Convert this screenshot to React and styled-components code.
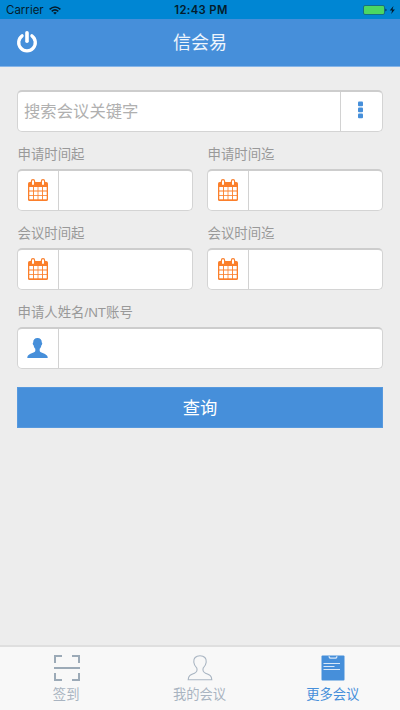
import React from "react";
import styled, { createGlobalStyle } from "styled-components";

const BLUE = "#468fda";
const ORANGE = "#fb7f2b";
const INK = "#041c2c";

const GlobalStyle = createGlobalStyle`
  * { box-sizing: border-box; }
  body {
    margin: 0;
    background: #ededed;
    font-family: "Liberation Sans", "Noto Sans CJK SC", sans-serif;
  }
`;

const Screen = styled.div`
  display: flex;
  flex-direction: column;
  height: 710px;
  overflow: hidden;
`;

const StatusBar = styled.div`
  display: grid;
  grid-template-columns: 1fr auto 1fr;
  align-items: center;
  flex: none;
  height: 19px;
  padding: 1px 4px 0 6px;
  background: #0086d3;
  color: ${INK};
  font-family: Inter, sans-serif;
  font-size: 11.5px;
  line-height: 18px;
`;

const StatusGroup = styled.div`
  display: flex;
  align-items: center;
  justify-content: ${(p) => (p.$end ? "flex-end" : "flex-start")};
  gap: ${(p) => (p.$end ? "4px" : "5px")};
`;

const Clock = styled.span`
  font-size: 11.3px;
  font-weight: 600;
  letter-spacing: 0.35px;
`;

const Header = styled.header`
  display: grid;
  grid-template-columns: 60px 1fr 60px;
  align-items: center;
  flex: none;
  height: 48px;
  background: ${BLUE};
  border-bottom: 1px solid #86b5e8;
`;

const PowerButton = styled.button`
  display: flex;
  width: 52px;
  height: 40px;
  padding: 0 0 1px 15px;
  align-items: center;
  border: 0;
  background: none;
`;

const Title = styled.h1`
  margin: 1px 0 0;
  color: #eef5fc;
  font-size: 18px;
  line-height: 24px;
  font-weight: 400;
  text-align: center;
`;

const Form = styled.main`
  flex: 1;
  padding: 23px 17px 0;
`;

const Row = styled.div`
  display: grid;
  grid-template-columns: ${(p) => (p.$single ? "1fr" : "repeat(2, minmax(0, 1fr))")};
  gap: 14px;
`;

const FieldGroup = styled.label`
  display: block;
  min-width: 0;
`;

const Label = styled.span`
  display: block;
  height: 37px;
  padding: 13px 0 0 0.5px;
  color: #999;
  font-size: 13.4px;
  line-height: 20px;
  white-space: nowrap;
`;

const Field = styled.div`
  display: flex;
  height: 42px;
  overflow: hidden;
  border: 1px solid #d4d4d4;
  border-top: 2px solid #cdcdcd;
  border-radius: 5px;
  background: #fff;
`;

const Addon = styled.span`
  display: flex;
  flex: none;
  align-items: center;
  justify-content: center;
  width: ${(p) => (p.$right ? "42px" : "41px")};
  padding-bottom: ${(p) => (p.$right ? "3px" : "2px")};
  padding-right: ${(p) => (p.$right ? "2px" : "1px")};
  border-style: solid;
  border-color: #d2d2d2;
  border-width: ${(p) => (p.$right ? "0 0 0 1px" : "0 1px 0 0")};
`;

const Input = styled.input`
  flex: 1;
  min-width: 0;
  padding: 0 6px 1px;
  border: 0;
  outline: 0;
  background: transparent;
  color: #555;
  font-family: inherit;
  font-size: 16.35px;
  &::placeholder { color: #b0b0b0; opacity: 1; }
`;

const SubmitButton = styled.button`
  display: block;
  width: 100%;
  height: 41px;
  margin-top: 18px;
  padding: 0 0 2px;
  border: 1px solid #5799de;
  background: ${BLUE};
  color: #fff;
  font-family: inherit;
  font-size: 17.3px;
`;

const TabBar = styled.nav`
  display: grid;
  grid-template-columns: repeat(3, 1fr);
  flex: none;
  height: 65px;
  border-top: 2px solid #dfdfdf;
  background: #f8f8f8;
`;

const Tab = styled.a`
  display: flex;
  flex-direction: column;
  align-items: center;
  padding-top: 8px;
  color: ${(p) => (p.$active ? BLUE : "#a9b4c1")};
  font-size: 13.3px;
  line-height: 20px;
`;

const TabLabel = styled.span`
  margin-top: 4px;
  padding-right: 1px;
`;

const WifiIcon = () => (
  <svg width="12" height="9" viewBox="0 0 12 9" fill="none" stroke={INK} strokeWidth="1.6">
    <path d="M.6 3.3Q6-1.3 11.4 3.3M2.7 5.4Q6 2.5 9.3 5.4" />
    <path d="M4.2 6.7Q6 5.1 7.8 6.7L6 8.6Z" fill={INK} stroke="none" />
  </svg>
);

const BatteryIcon = () => (
  <svg width="33" height="10" viewBox="0 0 33 10">
    <rect x=".5" y=".5" width="21" height="9" rx="1.5" fill="#4bd763" stroke="#166f83" />
    <path d="M22.5 3.5Q24.5 5 22.5 6.5Z" fill={INK} />
    <path d="M30.5 1L26.7 5.5H29.1L28.2 9L31.9 4.4H29.5Z" fill={INK} />
  </svg>
);

const PowerIcon = () => (
  <svg width="24" height="24" viewBox="0 0 24 24" fill="none" stroke="#fff" strokeLinecap="round">
    <path d="M7.1 5.8A8.3 8.3 0 1 0 16.9 5.8" strokeWidth="3.3" />
    <path d="M12 2.8V11.2" strokeWidth="3.6" />
  </svg>
);

const CalendarIcon = () => (
  <svg width="20" height="22" viewBox="0 0 20 22">
    <rect y="3" width="20" height="19" rx="1.6" fill={ORANGE} />
    <g fill="#fff">
      {[8, 12.5, 16.8].map((y) =>
        [1.3, 5.9, 10.4, 15].map((x) => (
          <rect key={`${x}-${y}`} x={x} y={y} width="3.7" height="3.5" />
        ))
      )}
    </g>
    <rect x="3.4" y=".6" width="3.2" height="6" rx="1.6" fill="#fff" stroke={ORANGE} strokeWidth="1.2" />
    <rect x="13.4" y=".6" width="3.2" height="6" rx="1.6" fill="#fff" stroke={ORANGE} strokeWidth="1.2" />
  </svg>
);

const UserIcon = () => (
  <svg width="21" height="20" viewBox="0 0 21 20" fill={BLUE}>
    <path d="M10.5 0C7.7 0 6.2 1.6 6.2 4.5C5.4 4.7 5.7 6.7 6.6 7.3C6.9 9 7.6 10.1 8.3 10.8V13C7.7 14.8 1.9 15.5.7 18C.4 18.7.3 19.3.3 20H20.7C20.7 19.3 20.6 18.7 20.3 18C19.1 15.5 13.3 14.8 12.7 13V10.8C13.4 10.1 14.1 9 14.4 7.3C15.3 6.7 15.6 4.7 14.8 4.5C14.8 1.6 13.3 0 10.5 0Z" />
  </svg>
);

const MoreIcon = () => (
  <svg width="5" height="18" viewBox="0 0 5 18" fill={BLUE}>
    <rect y=".5" width="5" height="4.7" rx="1" />
    <rect y="6.5" width="5" height="4.7" rx="1" />
    <rect y="12.5" width="5" height="4.7" rx="1" />
  </svg>
);

const ScanIcon = () => (
  <svg width="26" height="26" viewBox="0 0 26 26" fill="none" stroke="#9caab7" strokeWidth="2">
    <path d="M1 8V1H8M18 1H25V8M25 18V25H18M8 25H1V18M0 13H26" />
  </svg>
);

const ProfileIcon = () => (
  <svg width="26" height="26" viewBox="0 0 26 26" fill="none" stroke="#a9b5c2" strokeWidth="1.1">
    <path d="M13 .8C8.8.8 6.3 3.2 6.8 7.2C7.1 10 8.5 11.3 9.8 13C10.5 15.4 10 17 7.5 18.2C4 19.8 1.5 20.2 1.2 24.7H24.8C24.5 20.2 22 19.8 18.5 18.2C16 17 15.5 15.4 16.2 13C17.5 11.3 18.9 10 19.2 7.2C19.7 3.2 17.2.8 13 .8Z" />
  </svg>
);

const NotesIcon = () => (
  <svg width="24" height="26" viewBox="0 0 24 26">
    <rect x=".5" y=".5" width="23" height="25" rx="1" fill={BLUE} />
    <path d="M7.8 1.3L9 3.2H15L16.2 1.3" fill="none" stroke="#d9e8f8" strokeWidth="1.3" />
    <path d="M2.5 8.5H19M2.5 11.5H13.5M2.5 14.5H19" fill="none" stroke="#d9e8f8" strokeWidth="1.1" />
  </svg>
);

const DateField = ({ label }) => (
  <FieldGroup>
    <Label>{label}</Label>
    <Field>
      <Addon><CalendarIcon /></Addon>
      <Input />
    </Field>
  </FieldGroup>
);

export default function App() {
  return (
    <Screen>
      <GlobalStyle />
      <StatusBar>
        <StatusGroup>
          <span>Carrier</span>
          <WifiIcon />
        </StatusGroup>
        <Clock>12:43 PM</Clock>
        <StatusGroup $end><BatteryIcon /></StatusGroup>
      </StatusBar>
      <Header>
        <PowerButton aria-label="退出"><PowerIcon /></PowerButton>
        <Title>信会易</Title>
      </Header>
      <Form>
        <Field>
          <Input placeholder="搜索会议关键字" />
          <Addon $right><MoreIcon /></Addon>
        </Field>
        <Row>
          <DateField label="申请时间起" />
          <DateField label="申请时间迄" />
        </Row>
        <Row>
          <DateField label="会议时间起" />
          <DateField label="会议时间迄" />
        </Row>
        <Row $single>
          <FieldGroup>
            <Label>申请人姓名/NT账号</Label>
            <Field>
              <Addon><UserIcon /></Addon>
              <Input />
            </Field>
          </FieldGroup>
        </Row>
        <SubmitButton>查询</SubmitButton>
      </Form>
      <TabBar>
        <Tab><ScanIcon /><TabLabel>签到</TabLabel></Tab>
        <Tab><ProfileIcon /><TabLabel>我的会议</TabLabel></Tab>
        <Tab $active><NotesIcon /><TabLabel>更多会议</TabLabel></Tab>
      </TabBar>
    </Screen>
  );
}
